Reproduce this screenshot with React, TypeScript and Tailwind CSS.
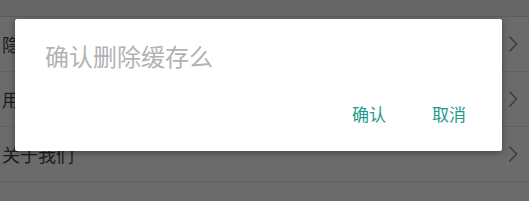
const rows = ['隐私政策', '用户协议', '关于我们']

function Chevron() {
  return (
    <svg width="10" height="18" viewBox="0 0 10 18" fill="none" className="shrink-0">
      <path d="M1.5 1.5 L8.5 9 L1.5 16.5" stroke="#3a3a3a" strokeWidth="1.4" />
    </svg>
  )
}

export default function App() {
  return (
    <div
      className="relative h-[201px] w-[529px] overflow-hidden bg-[#6b6b6b]"
      style={{ fontFamily: '"Noto Sans CJK SC", "Noto Sans", sans-serif' }}
    >
      <div className="h-[17px] border-b border-[#5c5c5c] bg-[#666666]" />
      <div className="flex flex-col">
        {rows.map((r) => (
          <div
            key={r}
            className="flex h-[55px] items-center justify-between border-b border-[#616161] pl-[2px] pr-[11px]"
          >
            <span className="text-[18px] leading-none text-[#1c1c1c]">{r}</span>
            <Chevron />
          </div>
        ))}
      </div>

      <div className="absolute left-[15px] top-[19px] flex h-[132px] w-[487px] flex-col rounded-[2px] bg-white shadow-[0_2px_6px_rgba(0,0,0,0.35)]">
        <div className="pl-[30px] pt-[25px] text-[24px] leading-none text-[#b2b2b2]">确认删除缓存么</div>
        <div className="mt-auto flex justify-end gap-[46px] pb-[29px] pr-[36px] text-[17px] leading-none text-[#21998c]">
          <span>确认</span>
          <span>取消</span>
        </div>
      </div>
    </div>
  )
}
